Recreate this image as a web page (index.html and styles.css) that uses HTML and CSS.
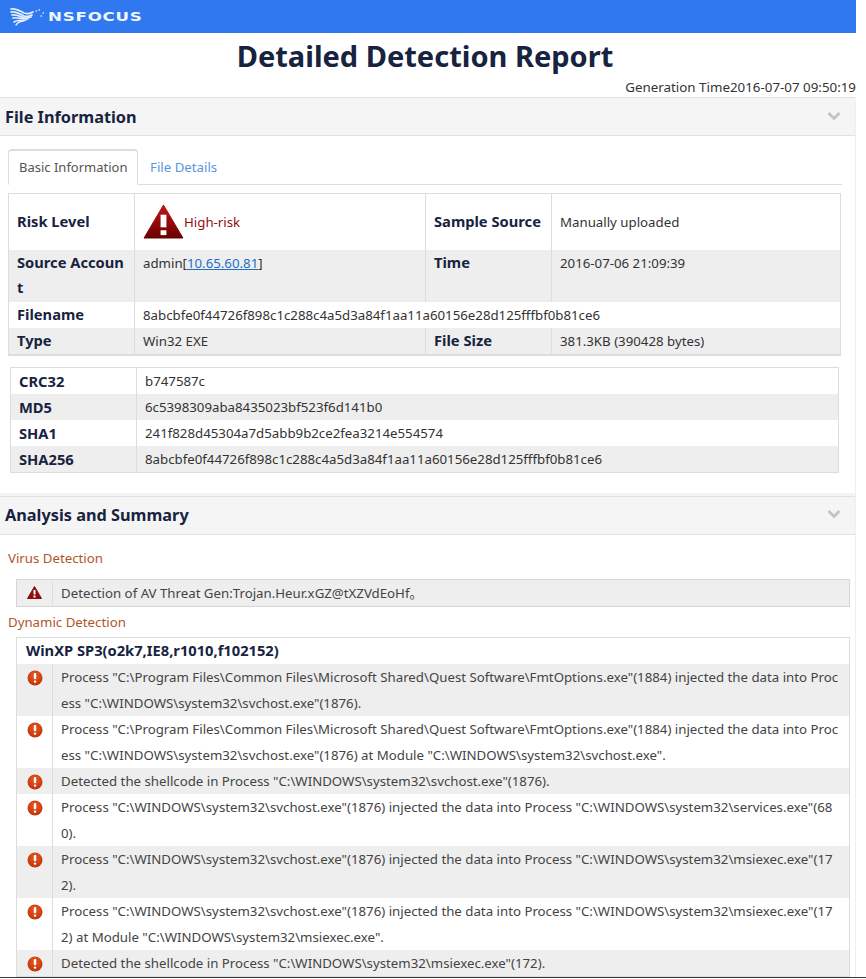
FILE: index.html
```html
<!DOCTYPE html>
<html lang="en">
<head>
    <meta charset="UTF-8">
    <title>Detailed Detection Report</title>
    <link rel="stylesheet" href="styles.css">
</head>
<body>
<div class="page">
    <div class="topbar">
        <svg class="logo-mark" width="35" height="18" viewBox="0 0 35 18" fill="none" stroke="#e6eefc" stroke-linecap="round">
            <path d="M1 1 C6 0 10 3 14 5 C17 6 20 6 23 4" stroke-width="1.7"/>
            <path d="M1 4 C6 3 10 6 14 8 C17 9 20 8 22 7" stroke-width="1.7"/>
            <path d="M2 7 C7 6 10 9 15 10 C17 10 19 10 21 9" stroke-width="1.7"/>
            <path d="M3 10 C7 9 11 11 18 11" stroke-width="1.6"/>
            <path d="M4 14 C7 12 11 12 16 12" stroke-width="1.6"/>
            <path d="M6 17 C8 14 11 13 14 13" stroke-width="1.4"/>
            <path d="M26 3 L26.5 3 M29 2 L29.5 2 M33 5 L33.5 5 M31 8 L31.5 8" stroke-width="1.3"/>
        </svg>
        <span class="logo-text">NSFOCUS</span>
    </div>

    <h1 class="report-title">Detailed Detection Report</h1>
    <div class="gen-time">Generation Time2016-07-07 09:50:19</div>

    <section class="panel">
        <div class="panel-head">
            <h2>File Information</h2>
            <svg class="chevron" width="14" height="10" viewBox="0 0 14 10"><path d="M1.5 2 L7 7.5 L12.5 2" fill="none" stroke="#c4c4c4" stroke-width="3"/></svg>
        </div>
        <div class="panel-body">
            <div class="tabs">
                <span class="tab active">Basic Information</span>
                <span class="tab">File Details</span>
            </div>
            <table class="info basic">
                <colgroup><col class="c-label"><col class="c-value"><col class="c-label"><col></colgroup>
                <tr class="risk-row">
                    <th>Risk Level</th>
                    <td>
                        <div class="risk">
                            <svg width="41" height="35" viewBox="0 0 42 36">
                                <defs>
                                    <linearGradient id="riskGrad" x1="0" y1="0" x2="0" y2="1">
                                        <stop offset="0" stop-color="#c01515"/>
                                        <stop offset="1" stop-color="#6a0000"/>
                                    </linearGradient>
                                </defs>
                                <path d="M21 1 L41 35 L1 35 Z" fill="url(#riskGrad)" stroke="url(#riskGrad)" stroke-linejoin="round"/>
                                <rect x="18" y="11" width="6" height="13" fill="#fff"/>
                                <rect x="18" y="27" width="6" height="5" fill="#fff"/>
                            </svg>
                            <span>High-risk</span>
                        </div>
                    </td>
                    <th>Sample Source</th>
                    <td>Manually uploaded</td>
                </tr>
                <tr class="alt source-row">
                    <th>Source Account</th>
                    <td>admin[<a href="#">10.65.60.81</a>]</td>
                    <th>Time</th>
                    <td>2016-07-06 21:09:39</td>
                </tr>
                <tr>
                    <th>Filename</th>
                    <td colspan="3">8abcbfe0f44726f898c1c288c4a5d3a84f1aa11a60156e28d125fffbf0b81ce6</td>
                </tr>
                <tr class="alt">
                    <th>Type</th>
                    <td>Win32 EXE</td>
                    <th>File Size</th>
                    <td>381.3KB (390428 bytes)</td>
                </tr>
            </table>
            <table class="info hashes">
                <colgroup><col class="c-label"><col></colgroup>
                <tr><th>CRC32</th><td>b747587c</td></tr>
                <tr class="alt"><th>MD5</th><td>6c5398309aba8435023bf523f6d141b0</td></tr>
                <tr><th>SHA1</th><td>241f828d45304a7d5abb9b2ce2fea3214e554574</td></tr>
                <tr class="alt"><th>SHA256</th><td>8abcbfe0f44726f898c1c288c4a5d3a84f1aa11a60156e28d125fffbf0b81ce6</td></tr>
            </table>
        </div>
    </section>

    <section class="panel second">
        <div class="panel-head">
            <h2>Analysis and Summary</h2>
            <svg class="chevron" width="14" height="10" viewBox="0 0 14 10"><path d="M1.5 2 L7 7.5 L12.5 2" fill="none" stroke="#c4c4c4" stroke-width="3"/></svg>
        </div>
        <h3 class="sub first">Virus Detection</h3>
        <table class="detect virus">
            <colgroup><col class="c-ico"><col></colgroup>
            <tr class="alt">
                <td class="ico">
                    <svg width="15" height="13" viewBox="0 0 15 13"><path d="M7.5 .5 L14.5 12.5 L.5 12.5 Z" fill="#8e0c0c" stroke="#8e0c0c" stroke-linejoin="round"/><rect x="6.5" y="4" width="2" height="4.5" fill="#fff"/><rect x="6.5" y="9.5" width="2" height="2" fill="#fff"/></svg>
                </td>
                <td>Detection of AV Threat Gen:Trojan.Heur.xGZ@tXZVdEoHf。</td>
            </tr>
        </table>
        <h3 class="sub">Dynamic Detection</h3>
        <table class="detect dynamic">
            <colgroup><col class="c-ico"><col></colgroup>
            <tr><th colspan="2" class="os">WinXP SP3(o2k7,IE8,r1010,f102152)</th></tr>
            <tr class="alt">
                <td class="ico"><svg class="dot" width="16" height="16" viewBox="0 0 16 16"><use href="#warn"/></svg></td>
                <td><span class="first-line">Process "C:\Program Files\Common Files\Microsoft Shared\Quest Software\FmtOptions.exe"(1884) injected the data into Proc</span><br>ess "C:\WINDOWS\system32\svchost.exe"(1876).</td>
            </tr>
            <tr>
                <td class="ico"><svg class="dot" width="16" height="16" viewBox="0 0 16 16"><use href="#warn"/></svg></td>
                <td><span class="first-line">Process "C:\Program Files\Common Files\Microsoft Shared\Quest Software\FmtOptions.exe"(1884) injected the data into Proc</span><br>ess "C:\WINDOWS\system32\svchost.exe"(1876) at Module "C:\WINDOWS\system32\svchost.exe".</td>
            </tr>
            <tr class="alt">
                <td class="ico"><svg class="dot" width="16" height="16" viewBox="0 0 16 16"><use href="#warn"/></svg></td>
                <td>Detected the shellcode in Process "C:\WINDOWS\system32\svchost.exe"(1876).</td>
            </tr>
            <tr>
                <td class="ico"><svg class="dot" width="16" height="16" viewBox="0 0 16 16"><use href="#warn"/></svg></td>
                <td>Process "C:\WINDOWS\system32\svchost.exe"(1876) injected the data into Process "C:\WINDOWS\system32\services.exe"(680).</td>
            </tr>
            <tr class="alt">
                <td class="ico"><svg class="dot" width="16" height="16" viewBox="0 0 16 16"><use href="#warn"/></svg></td>
                <td>Process "C:\WINDOWS\system32\svchost.exe"(1876) injected the data into Process "C:\WINDOWS\system32\msiexec.exe"(172).</td>
            </tr>
            <tr>
                <td class="ico"><svg class="dot" width="16" height="16" viewBox="0 0 16 16"><use href="#warn"/></svg></td>
                <td>Process "C:\WINDOWS\system32\svchost.exe"(1876) injected the data into Process "C:\WINDOWS\system32\msiexec.exe"(172) at Module "C:\WINDOWS\system32\msiexec.exe".</td>
            </tr>
            <tr class="alt">
                <td class="ico"><svg class="dot" width="16" height="16" viewBox="0 0 16 16"><use href="#warn"/></svg></td>
                <td>Detected the shellcode in Process "C:\WINDOWS\system32\msiexec.exe"(172).</td>
            </tr>
        </table>
    </section>
</div>

<svg width="0" height="0" class="defs">
    <defs>
        <radialGradient id="warnGrad" cx="50%" cy="35%" r="70%">
            <stop offset="0" stop-color="#ec5a22"/>
            <stop offset="1" stop-color="#bd2f08"/>
        </radialGradient>
        <g id="warn">
            <circle cx="8" cy="8" r="7.5" fill="url(#warnGrad)"/>
            <rect x="6.8" y="3" width="2.4" height="6.2" rx="1" fill="#fff"/>
            <rect x="6.8" y="10.4" width="2.4" height="2.4" rx="1" fill="#fff"/>
        </g>
    </defs>
</svg>
</body>
</html>
```

FILE: styles.css
```css
* {
    box-sizing: border-box;
}

html, body {
    margin: 0;
    height: 979px;
    overflow: hidden;
    background-color: #fff;
}

body {
    font-family: "Noto Sans", "Noto Sans CJK SC", Arial, sans-serif;
    font-size: 13.25px;
    color: #333;
}

.defs {
    display: block;
    height: 0;
}

.page {
    width: 866px;
    height: 978px;
    overflow: hidden;
    border-bottom: 1px solid #3a3a3a;
}

.topbar {
    width: 856px;
    height: 33px;
    background-color: #2f78f0;
    display: flex;
    align-items: center;
    padding-left: 10px;
}

.logo-mark {
    margin-right: 3px;
}

.logo-text {
    font-family: "DejaVu Sans", sans-serif;
    font-weight: bold;
    font-size: 12.5px;
    letter-spacing: 0.6px;
    color: #f2f6fe;
    transform: scaleX(1.33);
    transform-origin: left center;
}

.report-title {
    width: 850px;
    margin: 0;
    height: 46px;
    padding-top: 1px;
    text-align: center;
    font-size: 29px;
    line-height: 44px;
    font-weight: bold;
    color: #17233f;
}

.gen-time {
    width: 856px;
    height: 18px;
    line-height: 16px;
    font-size: 13.35px;
    text-align: right;
    color: #333;
}

.panel {
    width: 856px;
    border-right: 1px solid #efefef;
}

.panel-head {
    height: 39px;
    display: flex;
    align-items: center;
    justify-content: space-between;
    padding: 0 14px 0 5px;
    background-color: #f5f5f5;
    border-top: 1px solid #e0e0e0;
    border-bottom: 1px solid #e0e0e0;
}

.panel-head h2 {
    margin: 0;
    font-size: 16.3px;
    font-weight: bold;
    color: #17233f;
}

.chevron {
    margin-top: -2px;
}

.panel-body {
    padding: 13px 13px 20px 8px;
}

.tabs {
    height: 36px;
    display: flex;
    border-bottom: 1px solid #ddd;
}

.tab {
    height: 35px;
    line-height: 36px;
    padding: 0 11px;
    color: #5b95e0;
    white-space: nowrap;
}

.tab.active {
    width: 130px;
    height: 36px;
    padding: 0 10px;
    font-size: 13px;
    border: 1px solid #ddd;
    border-top: 2px solid #ddd;
    border-bottom: 1px solid #fff;
    border-radius: 4px 4px 0 0;
    color: #555;
    margin-right: 1px;
    line-height: 33px;
}

table {
    border-collapse: collapse;
    table-layout: fixed;
}

.info {
    border: 1px solid #ddd;
    word-break: break-all;
}

.info th {
    text-align: left;
    font-size: 14.7px;
    color: #17233f;
    padding: 0 8px;
    line-height: 26px;
    height: 26px;
    vertical-align: top;
    border-right: 1px solid #ddd;
}

.basic th {
    line-height: 25px;
}

.info td {
    padding: 0 8px;
    line-height: 26px;
    height: 26px;
    vertical-align: top;
    border-right: 1px solid #ddd;
}

.alt {
    background-color: #eee;
}

.basic {
    width: 833px;
    margin-top: 8px;
    border-bottom: 2px solid #ddd;
}

.c-label {
    width: 126px;
}

.c-value {
    width: 291px;
}

.risk-row th,
.risk-row td {
    height: 56px;
    vertical-align: middle;
}

.source-row td {
    height: 52px;
}

.risk {
    display: flex;
    align-items: center;
    color: #8e1010;
}

.info a {
    color: #1f6fc5;
    text-decoration: underline;
}

.hashes {
    width: 829px;
    margin: 11px 0 0 2px;
}

.panel.second {
    border-top: 3px solid #f3f3f3;
}

.sub {
    margin: 0;
    font-size: 13.25px;
    font-weight: normal;
    color: #b0552a;
    padding-left: 8px;
    line-height: 18px;
}

.sub.first {
    padding-top: 14px;
    height: 44px;
}

.sub:not(.first) {
    margin-top: 6px;
    height: 24px;
}

.detect {
    width: 834px;
    margin-left: 16px;
    border: 1px solid #ddd;
    word-break: break-all;
}

.virus {
    border-color: #d5d5d5;
}

.c-ico {
    width: 36px;
}

.detect td {
    padding: 0 9px 0 8px;
    line-height: 26px;
    vertical-align: top;
    color: #444;
}

.first-line {
    white-space: nowrap;
}

.detect .ico {
    padding: 0;
    text-align: center;
    border-right: 1px solid #ddd;
}

.detect .ico svg {
    display: block;
    margin: 6px auto 0;
}

.detect .os {
    text-align: left;
    font-size: 14.7px;
    padding: 0 9px 1px;
    line-height: 25px;
    color: #17233f;
}
```
